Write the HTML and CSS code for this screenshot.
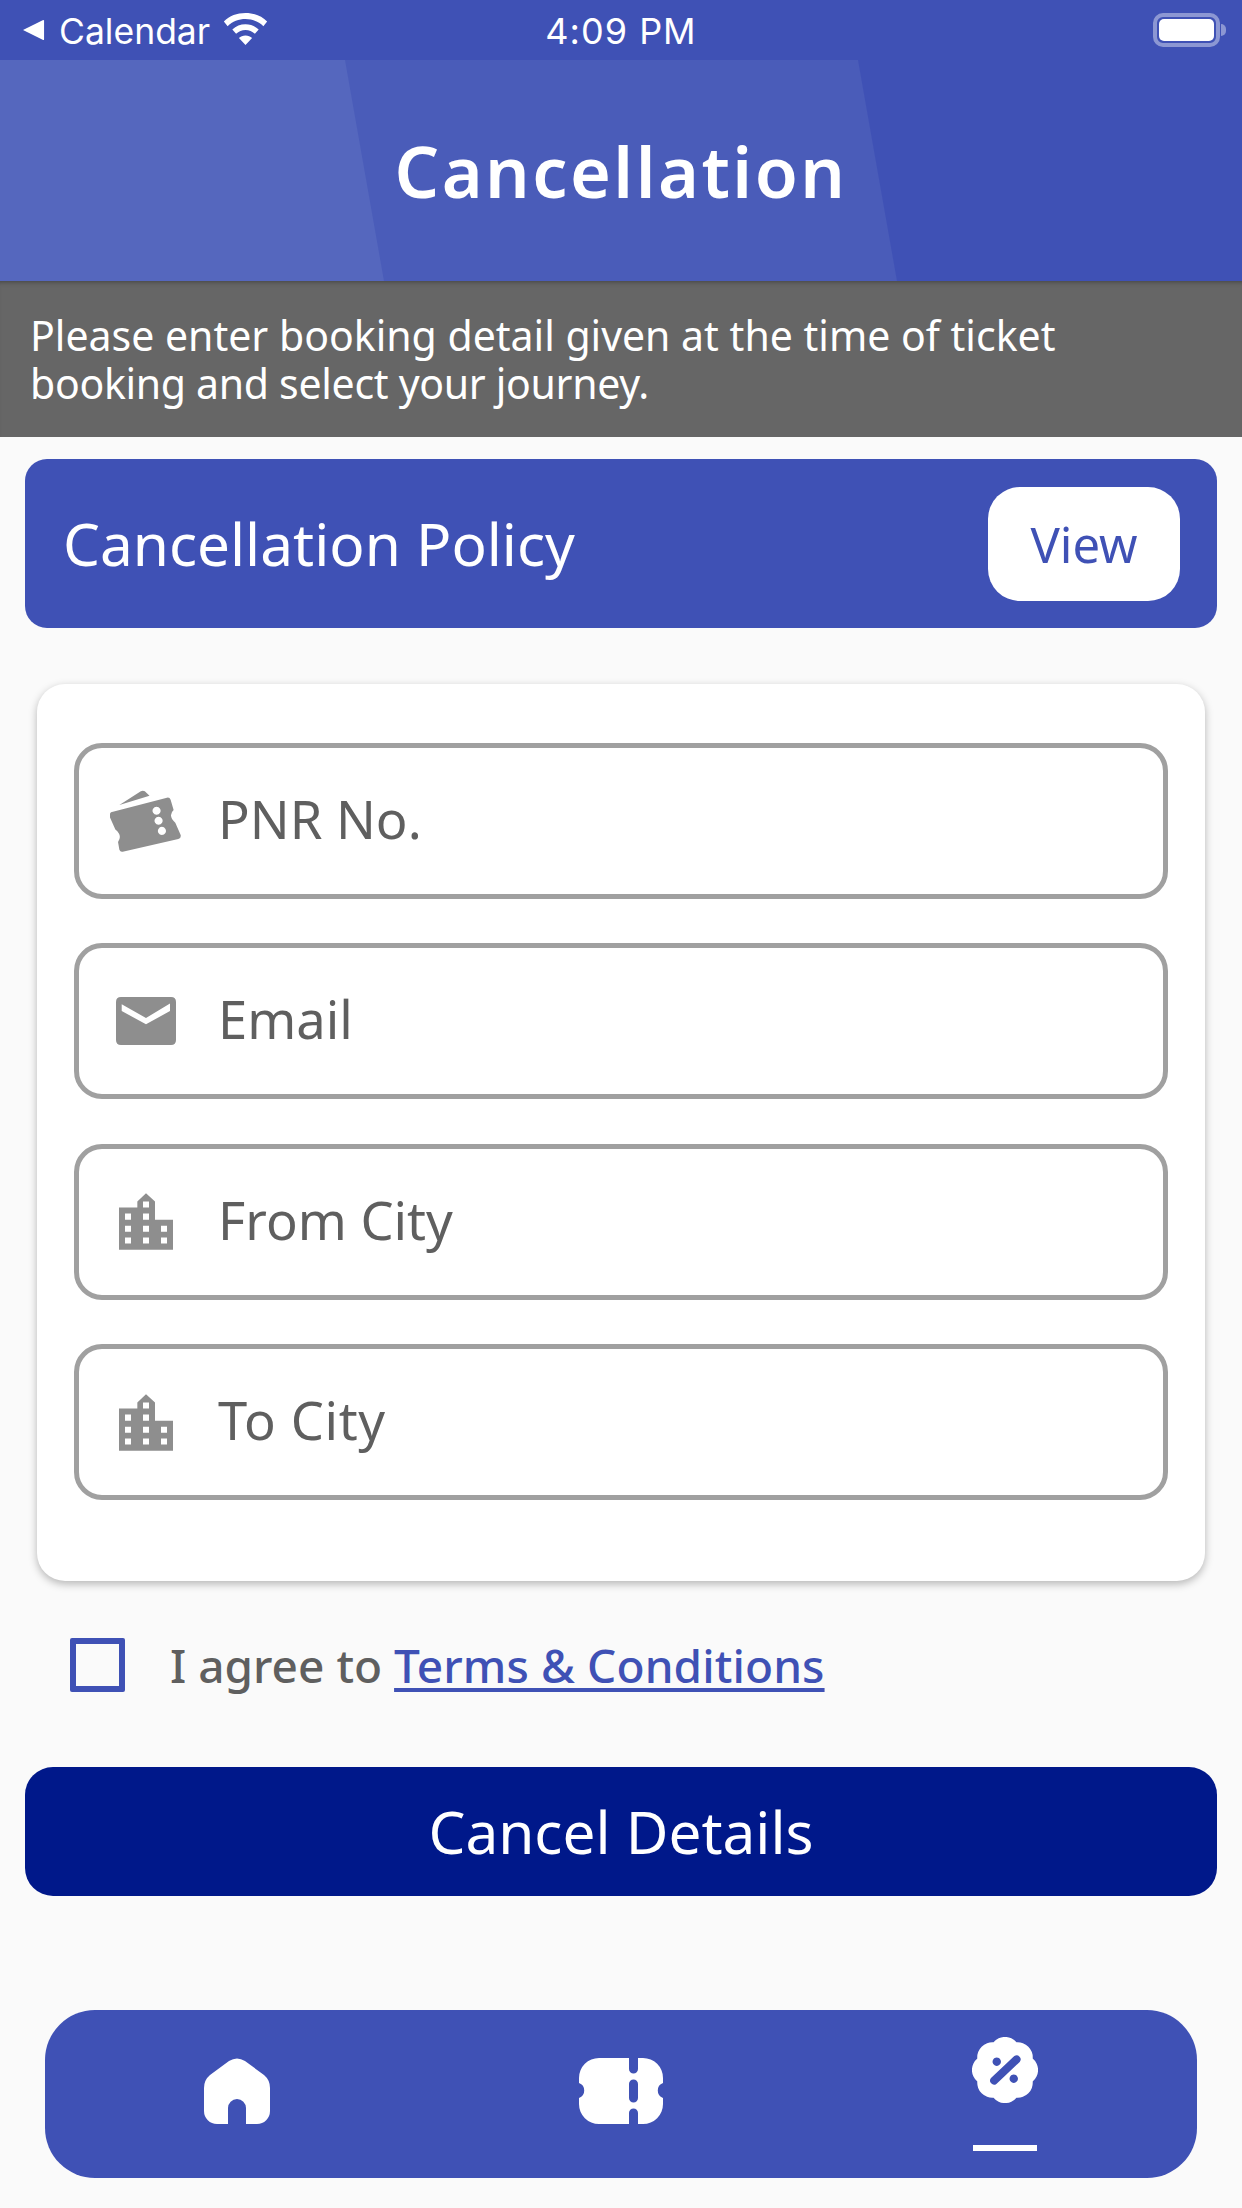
FILE: index.html
```html
<!DOCTYPE html>
<html lang="en">
<head>
<meta charset="utf-8">
<title>Cancellation</title>
<link rel="stylesheet" href="styles.css">
</head>
<body>
<div class="status">
  <div class="status-left">
    <svg class="back-tri" viewBox="0 0 24 24"><path d="M0 12 L22 1 Q23 1 23 2 V22 Q23 23 22 23 Z"/></svg>
    <span class="status-text">Calendar</span>
    <svg class="wifi" viewBox="0 0 46 34"><path d="M23 0 C32 0 40 3 46 9 L42 14 C37 9 30 6.500 23 6.500 C16 6.500 9 9 4 14 L0 9 C6 3 14 0 23 0 Z M23 12 C28.500 12 33 14 37 17.500 L33 22 C30 19.500 27 18 23 18 C19 18 16 19.500 13 22 L9 17.500 C13 14 17.500 12 23 12 Z M23 24 C26 24 28 25 30 26.500 L23 34 L16 26.500 C18 25 20 24 23 24 Z"/></svg>
  </div>
  <div class="status-time status-text">4:09 PM</div>
  <div class="status-right">
    <div class="battery"><div class="battery-fill"></div></div>
    <div class="battery-cap"></div>
  </div>
</div>
<header class="title-bar">
  <svg class="title-bg" viewBox="0 0 1242 221" preserveAspectRatio="none"><polygon class="bg-mid" points="0,0 858,0 897,221 0,221"/><polygon class="bg-left" points="0,0 345,0 384,221 0,221"/></svg>
  <h1>Cancellation</h1>
</header>
<div class="notice">Please enter booking detail given at the time of ticket<br><span class="notice-tight">booking and select your journey.</span></div>
<div class="policy">
  <span class="policy-title">Cancellation Policy</span>
  <span class="view-btn">View</span>
</div>
<section class="card">
  <div class="field">
    <svg class="ico ico-ticket" viewBox="0 0 212 185"><path class="g" d="M28 45 L92 4 Q98 0 104 4 L118 17 Z"/><path class="g" fill-rule="evenodd" d="M3 66 L170 23 Q178 21 181 29 L190 60 Q172 76 195 98 L211 134 Q213 144 204 146 L38 184 Q31 186 28 178 L24 155 Q38 136 16 118 L0 82 Q-2 70 3 66 Z M139 50 a12 12 0 1 0 .1 0 Z M145 80 a12 12 0 1 0 .1 0 Z M155 110 a12 12 0 1 0 .1 0 Z"/></svg>
    <span class="label">PNR No.</span>
  </div>
  <div class="field">
    <svg class="ico ico-mail" viewBox="0 0 60 48"><path class="g" fill-rule="evenodd" d="M5 0 H55 Q60 0 60 5 V43 Q60 48 55 48 H5 Q0 48 0 43 V5 Q0 0 5 0 Z M5.700 7.300 V14 L30 27.300 L54 14 V6.500 L30 21 Z"/></svg>
    <span class="label">Email</span>
  </div>
  <div class="field">
    <svg class="ico ico-city" viewBox="0 0 162 170"><path class="g" fill-rule="evenodd" d="M0 43 H55 V25 L81 0 L108 25 V80 H162 V170 H0 Z M18 61 V80 H36 V61 Z M72 25 V43 H90 V25 Z M72 61 V80 H90 V61 Z M18 98 V116 H36 V98 Z M72 98 V116 H90 V98 Z M126 98 V116 H144 V98 Z M18 133 V151 H36 V133 Z M72 133 V151 H90 V133 Z M126 133 V151 H144 V133 Z"/></svg>
    <span class="label">From City</span>
  </div>
  <div class="field">
    <svg class="ico ico-city" viewBox="0 0 162 170"><path class="g" fill-rule="evenodd" d="M0 43 H55 V25 L81 0 L108 25 V80 H162 V170 H0 Z M18 61 V80 H36 V61 Z M72 25 V43 H90 V25 Z M72 61 V80 H90 V61 Z M18 98 V116 H36 V98 Z M72 98 V116 H90 V98 Z M126 98 V116 H144 V98 Z M18 133 V151 H36 V133 Z M72 133 V151 H90 V133 Z M126 133 V151 H144 V133 Z"/></svg>
    <span class="label label-to">To City</span>
  </div>
</section>
<div class="agree">
  <span class="check"></span>
  <span class="agree-text">I agree to <a class="terms">Terms &amp; Conditions</a></span>
</div>
<div class="cancel-btn">Cancel Details</div>
<nav class="tabbar">
  <div class="tab">
    <svg class="tab-home" viewBox="0 0 66 66"><path class="w" d="M25 3 Q33 -2 41 3 L60 17 Q66 22 66 30 V53 A13 13 0 0 1 53 66 H42 V50 A9 9 0 0 0 24 50 V66 H13 A13 13 0 0 1 0 53 V30 Q0 22 6 17 Z"/></svg>
  </div>
  <div class="tab">
    <svg class="tab-ticket" viewBox="0 0 84 66"><path class="w" fill-rule="evenodd" d="M20 0 H50 V11 a4.500 4.500 0 0 0 9 0 V0 H64 a20 20 0 0 1 20 20 V25 a8 8 0 0 0 0 15 V46 a20 20 0 0 1 -20 20 H59 V55 a4.500 4.500 0 0 0 -9 0 V66 H20 a20 20 0 0 1 -20 -20 V40 a8 8 0 0 0 0 -15 V20 a20 20 0 0 1 20 -20 Z M50 26 V40 a4.500 4.500 0 0 0 9 0 V26 a4.500 4.500 0 0 0 -9 0 Z"/></svg>
  </div>
  <div class="tab tab-active">
    <svg class="tab-offer" viewBox="0 0 66 66"><path class="w" fill-rule="evenodd" d="M21.500 5.300 A15 15 0 0 1 44.500 5.300 A15 15 0 0 1 60.700 21.500 A15 15 0 0 1 60.700 44.500 A15 15 0 0 1 44.500 60.700 A15 15 0 0 1 21.500 60.700 A15 15 0 0 1 5.300 44.500 A15 15 0 0 1 5.300 21.500 A15 15 0 0 1 21.500 5.300 Z M42.300 19.100 L19 41.100 A4 4 0 0 0 24.400 46.900 L47.700 24.900 A4 4 0 0 0 42.300 19.100 Z M24.700 20.500 a4.200 4.200 0 1 0 .1 0 Z M41.700 37.500 a4.200 4.200 0 1 0 .1 0 Z"/></svg>
    <span class="tab-line"></span>
  </div>
</nav>
</body>
</html>
```
FILE: styles.css
```css
* { box-sizing: border-box; }
html, body { margin: 0; padding: 0; }
body {
  width: 1242px;
  height: 2208px;
  background: #fafafa;
  font-family: "Noto Sans", "Open Sans", sans-serif;
  overflow: hidden;
  position: relative;
}
.status {
  height: 60px;
  background: #3f51b5;
  color: #fff;
  display: grid;
  grid-template-columns: 1fr auto 1fr;
  align-items: center;
  font-family: Inter, "Liberation Sans", sans-serif;
  font-size: 35.5px;
}
.status-text { padding-top: 2px; }
.status-left { display: flex; align-items: center; padding-left: 23px; }
.back-tri { width: 22px; height: 22px; fill: #fff; margin-right: 14px; }
.wifi { width: 45px; height: 32px; fill: #fff; margin-left: 13px; margin-top: -2px; }
.status-time { letter-spacing: 1px; font-size: 36px; }
.status-right { display: flex; align-items: center; justify-content: flex-end; padding-right: 16px; }
.battery {
  width: 67px; height: 34px;
  border: 4px solid #8c97d3;
  border-radius: 10px;
  padding: 2px;
}
.battery-fill { width: 100%; height: 100%; background: #fff; border-radius: 5px; }
.battery-cap { width: 5px; height: 12px; background: #8c97d3; border-radius: 0 6px 6px 0; margin-left: 1px; }
.title-bar {
  height: 221px;
  background: #3f51b5;
  position: relative;
  display: flex;
  align-items: center;
  justify-content: center;
}
.title-bg { position: absolute; inset: 0; width: 100%; height: 100%; }
.bg-mid { fill: #4a5cb9; }
.bg-left { fill: #5567be; }
h1 {
  position: relative;
  margin: 0;
  color: #fff;
  font-size: 70px;
  font-weight: 600;
  letter-spacing: 2.5px;
  line-height: 1;
}
.notice {
  height: 156px;
  background: #666;
  color: #fff;
  font-size: 41px;
  line-height: 48px;
  padding: 30px 30px 0;
  box-shadow: inset 0 5px 5px -4px rgba(0,0,0,.35);
}
.notice-tight { letter-spacing: -0.3px; }
.policy {
  margin: 22px 25px 0;
  height: 169px;
  background: #3f51b5;
  border-radius: 22px;
  display: flex;
  align-items: center;
  justify-content: space-between;
  padding: 0 37px 0 38px;
  color: #fff;
}
.policy-title { font-size: 58.5px; padding-bottom: 2px; }
.view-btn {
  width: 192px; height: 114px;
  background: #fff;
  border-radius: 32px;
  color: #3f51b5;
  font-size: 49px;
  display: flex;
  align-items: center;
  justify-content: center;
}
.card {
  margin: 56px 37px 0;
  height: 897px;
  background: #fff;
  border-radius: 28px;
  box-shadow: 0 3px 8px rgba(0,0,0,.28);
  padding: 59px 37px 0;
  display: flex;
  flex-direction: column;
  gap: 44.4px;
}
.field {
  height: 156px;
  border: 5px solid #a0a0a0;
  border-radius: 28px;
  display: flex;
  align-items: center;
  position: relative;
}
.ico { flex: none; }
.g { fill: #8e8e8e; }
.ico-ticket { width: 71px; height: 62px; margin-left: 31px; margin-right: 37px; }
.ico-mail { width: 60px; height: 48px; margin-left: 37px; margin-right: 42px; }
.ico-city { width: 54px; height: 57px; margin-left: 40px; margin-right: 45px; }
.label { font-size: 52.5px; color: #5f5f5f; padding-bottom: 5px; }
.label-to { letter-spacing: 0.6px; }
.agree { margin: 57px 0 0 70px; display: flex; align-items: center; height: 54px; }
.check { width: 55px; height: 54px; border: 6px solid #3f51b5; border-radius: 2px; flex: none; }
.agree-text { margin-left: 45px; font-size: 46px; font-weight: 500; color: #5f5f5f; }
.terms { color: #3f51b5; font-weight: 500; letter-spacing: 0.1px; text-decoration: underline; text-underline-offset: 5px; text-decoration-thickness: 4px; }
.cancel-btn {
  margin: 75px 25px 0;
  height: 129px;
  background: #00188a;
  border-radius: 28px;
  color: #fff;
  font-size: 58.5px;
  padding-bottom: 2px;
  display: flex;
  align-items: center;
  justify-content: center;
}
.tabbar {
  position: absolute;
  left: 45px; right: 45px; top: 2010px;
  height: 168px;
  background: #3f51b5;
  border-radius: 50px;
  display: block;
}
.tab { position: absolute; display: flex; flex-direction: column; align-items: center; }
.tab:nth-child(1) { left: 159px; top: 48px; }
.tab:nth-child(2) { left: 534px; top: 48px; }
.tab:nth-child(3) { left: 927px; top: 27px; }
.w { fill: #fff; }
.tab-home { width: 66px; height: 66px; display: block; }
.tab-ticket { width: 84px; height: 66px; display: block; }
.tab-offer { width: 66px; height: 66px; display: block; }
.tab-line { width: 64px; height: 6px; background: #fff; margin-top: 42px; }
```
